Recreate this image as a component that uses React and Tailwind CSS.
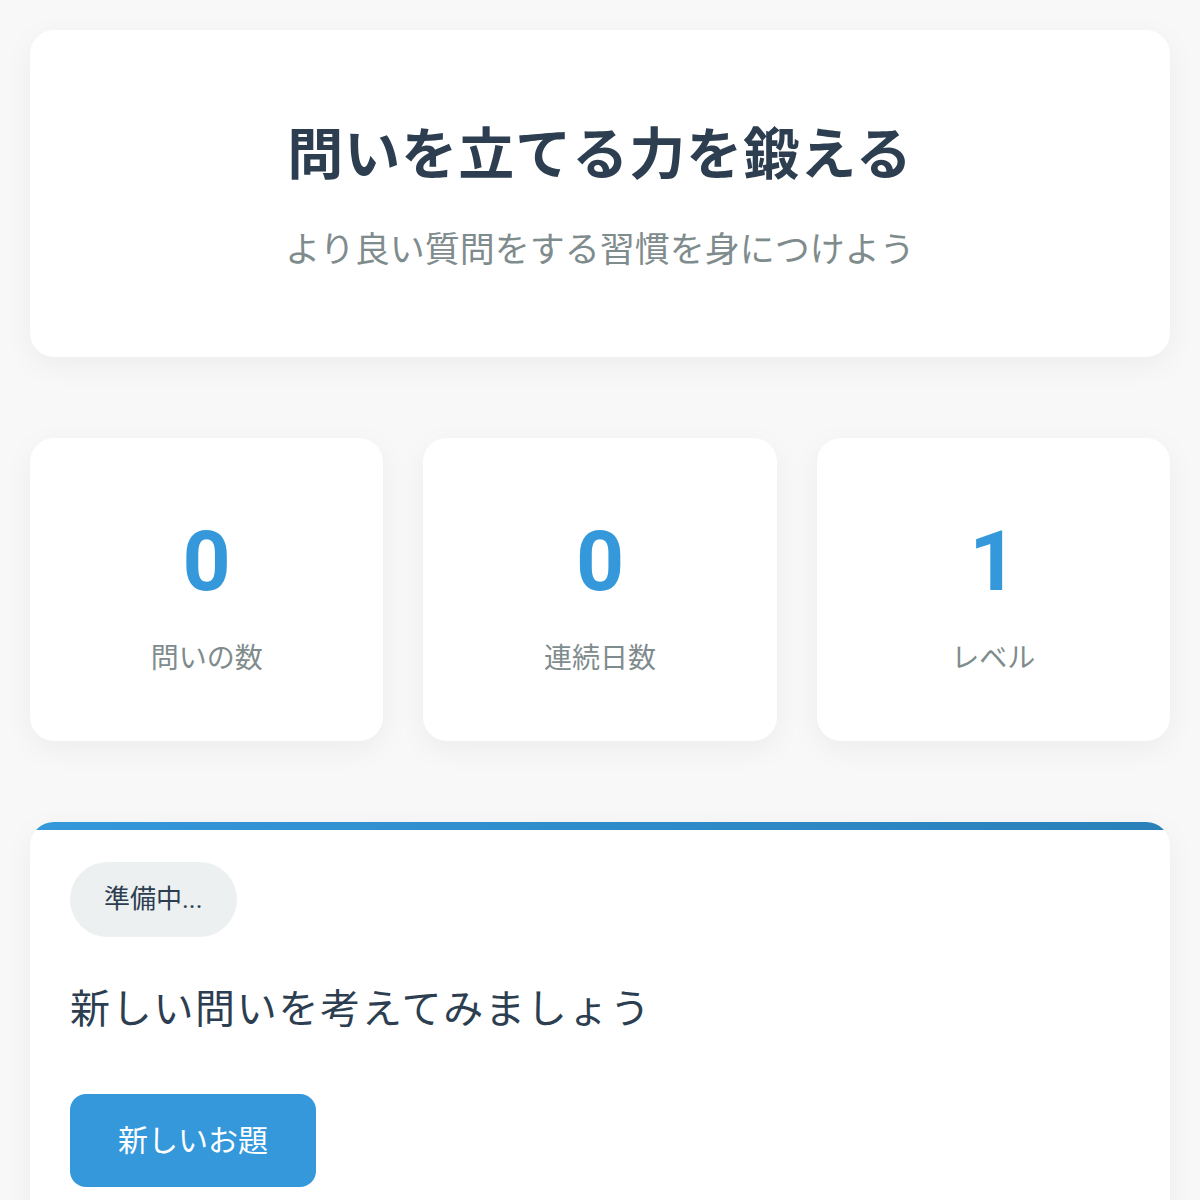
import React from "react";

const STATS = [
  { value: "0", label: "問いの数" },
  { value: "0", label: "連続日数" },
  { value: "1", label: "レベル" },
];

function StatCard({ value, label }) {
  return (
    <div className="flex h-[303px] flex-col items-center rounded-[24px] bg-white pt-[82px] shadow-[0_8px_30px_rgba(0,0,0,0.05)]">
      <div className="text-[84px] font-bold leading-none text-[#3498db]">{value}</div>
      <div className="mt-[34px] text-[28px] leading-[42px] text-[#7f8c8d]">{label}</div>
    </div>
  );
}

export default function App() {
  return (
    <div className="min-h-screen bg-[#f8f8f8] p-[30px] font-['Roboto','Noto_Sans_CJK_JP',sans-serif]">
      {/* header */}
      <div className="rounded-[24px] bg-white pb-[82px] pt-[92px] text-center shadow-[0_8px_30px_rgba(0,0,0,0.05)]">
        <h1 className="text-[56px] font-bold leading-[66px] tracking-[1px] text-[#2c3e50]">問いを立てる力を鍛える</h1>
        <p className="mt-[39px] text-[35px] leading-[48px] text-[#7f8c8d]">より良い質問をする習慣を身につけよう</p>
      </div>

      {/* stats */}
      <div className="mt-[81px] grid grid-cols-3 gap-[40px]">
        {STATS.map((s) => (
          <StatCard key={s.label} {...s} />
        ))}
      </div>

      {/* question card */}
      <div className="relative mt-[81px] overflow-hidden rounded-[24px] bg-white px-[40px] pb-[60px] pt-[40px] shadow-[0_8px_30px_rgba(0,0,0,0.05)]">
        <div className="absolute inset-x-0 top-0 h-[8px] bg-gradient-to-r from-[#3498db] to-[#2980b9]" />
        <span className="inline-flex h-[75px] items-center rounded-full bg-[#ecf0f1] px-[34px] text-[26px] text-[#2c3e50]">
          準備中...
        </span>
        <p className="mt-[43px] text-[40px] leading-[60px] tracking-[1.7px] text-[#2c3e50]">新しい問いを考えてみましょう</p>
        <button className="mt-[54px] h-[93px] rounded-[16px] bg-[#3498db] px-[48px] text-[30px] text-white">
          新しいお題
        </button>
      </div>
    </div>
  );
}
